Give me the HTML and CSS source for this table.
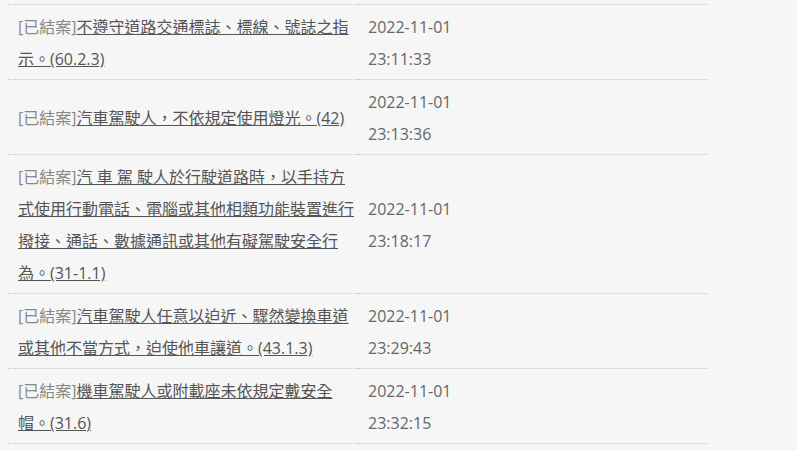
FILE: index.html
```html
<!DOCTYPE html>
<html lang="zh-Hant">
<head>
<meta charset="utf-8">
<link rel="stylesheet" href="styles.css">
</head>
<body>
<table class="list">
  <tr>
    <td class="title"><span class="status">[已結案]</span><a href="#">不遵守道路交通標誌、標線、號誌之指示。(60.2.3)</a></td>
    <td class="date">2022-11-01 23:11:33</td>
    <td class="rest"></td>
  </tr>
  <tr>
    <td class="title"><span class="status">[已結案]</span><a href="#">汽車駕駛人，不依規定使用燈光。(42)</a></td>
    <td class="date">2022-11-01 23:13:36</td>
    <td class="rest"></td>
  </tr>
  <tr>
    <td class="title"><span class="status">[已結案]</span><a href="#">汽 車 駕 駛人於行駛道路時，以手持方式使用行動電話、電腦或其他相類功能裝置進行撥接、通話、數據通訊或其他有礙駕駛安全行為。(31-1.1)</a></td>
    <td class="date">2022-11-01 23:18:17</td>
    <td class="rest"></td>
  </tr>
  <tr>
    <td class="title"><span class="status">[已結案]</span><a href="#">汽車駕駛人任意以迫近、驟然變換車道或其他不當方式，迫使他車讓道。(43.1.3)</a></td>
    <td class="date">2022-11-01 23:29:43</td>
    <td class="rest"></td>
  </tr>
  <tr>
    <td class="title"><span class="status">[已結案]</span><a href="#">機車駕駛人或附載座未依規定戴安全帽。(31.6)</a></td>
    <td class="date">2022-11-01 23:32:15</td>
    <td class="rest"></td>
  </tr>
</table>
</body>
</html>
```
FILE: styles.css
```css
html, body {
  margin: 0;
  background: #f6f6f6;
}
body {
  padding: 4px 0 0 8px;
  font-family: "Open Sans", "Noto Sans CJK TC", sans-serif;
  font-size: 16px;
  line-height: 32px;
  color: #666;
}
.list {
  border-collapse: collapse;
  table-layout: fixed;
  width: 699px;
  border-top: 1px dotted #c8c8c8;
}
.list td {
  box-sizing: border-box;
  border-bottom: 1px dotted #c8c8c8;
  padding: 6px 10px 4px;
  vertical-align: middle;
}
.list td.title {
  width: 350px;
  padding-right: 0;
}
.list td.date {
  width: 120px;
  color: #666;
}
.status {
  color: #888;
}
.title a {
  color: #555;
  text-decoration: underline;
}
```
